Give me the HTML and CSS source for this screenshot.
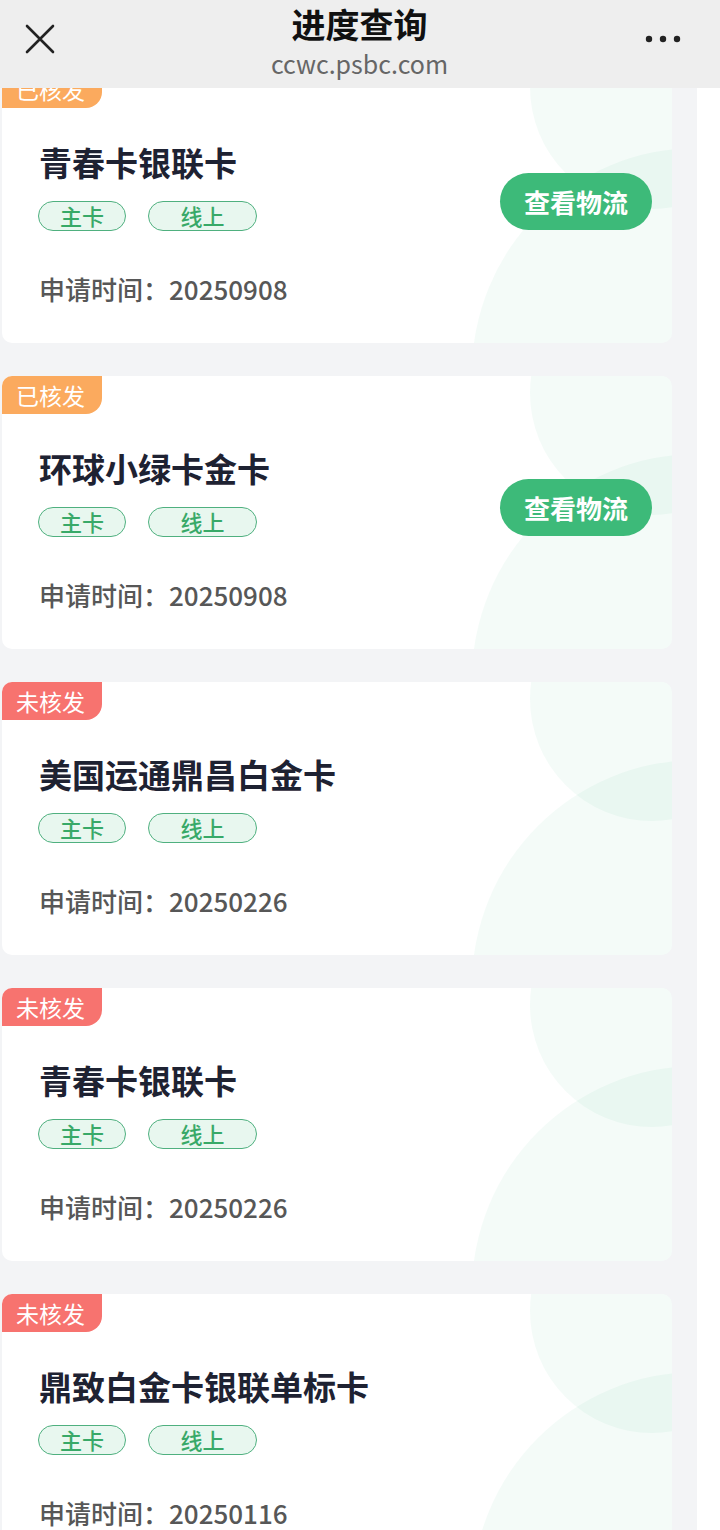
FILE: index.html
```html
<!DOCTYPE html>
<html lang="zh-CN">

<head>
    <meta charset="UTF-8">
    <meta name="viewport" content="width=device-width, initial-scale=1.0">
    <title>进度查询</title>
    <link rel="stylesheet" href="styles.css">
</head>

<body>
    <div class="topBar">
        <svg class="closeIcon" width="34" height="34" viewBox="0 0 34 34">
            <path d="M4 4 L30 30 M30 4 L4 30" stroke="#222" stroke-width="2.6" stroke-linecap="round" fill="none" />
        </svg>
        <div class="topTitle">
            <div class="titleMain">进度查询</div>
            <div class="titleSub">ccwc.psbc.com</div>
        </div>
        <svg class="moreIcon" width="40" height="10" viewBox="0 0 40 10">
            <circle cx="5" cy="5" r="3.2" fill="#222" />
            <circle cx="19" cy="5" r="3.2" fill="#222" />
            <circle cx="33" cy="5" r="3.2" fill="#222" />
        </svg>
    </div>

    <div id="list">
        <div class="card">
            <div class="deco decoTop"></div>
            <div class="deco decoBig"></div>
            <div class="badge done">已核发</div>
            <div class="cardHead">
                <div class="cardInfo">
                    <div class="cardName">青春卡银联卡</div>
                    <div class="tags">
                        <span class="tag tagMain">主卡</span>
                        <span class="tag tagLine">线上</span>
                    </div>
                </div>
                <button class="logistics">查看物流</button>
            </div>
            <div class="applyTime">申请时间：20250908</div>
        </div>

        <div class="card">
            <div class="deco decoTop"></div>
            <div class="deco decoBig"></div>
            <div class="badge done">已核发</div>
            <div class="cardHead">
                <div class="cardInfo">
                    <div class="cardName">环球小绿卡金卡</div>
                    <div class="tags">
                        <span class="tag tagMain">主卡</span>
                        <span class="tag tagLine">线上</span>
                    </div>
                </div>
                <button class="logistics">查看物流</button>
            </div>
            <div class="applyTime">申请时间：20250908</div>
        </div>

        <div class="card">
            <div class="deco decoTop"></div>
            <div class="deco decoBig"></div>
            <div class="badge notDone">未核发</div>
            <div class="cardHead">
                <div class="cardInfo">
                    <div class="cardName">美国运通鼎昌白金卡</div>
                    <div class="tags">
                        <span class="tag tagMain">主卡</span>
                        <span class="tag tagLine">线上</span>
                    </div>
                </div>
            </div>
            <div class="applyTime">申请时间：20250226</div>
        </div>

        <div class="card">
            <div class="deco decoTop"></div>
            <div class="deco decoBig"></div>
            <div class="badge notDone">未核发</div>
            <div class="cardHead">
                <div class="cardInfo">
                    <div class="cardName">青春卡银联卡</div>
                    <div class="tags">
                        <span class="tag tagMain">主卡</span>
                        <span class="tag tagLine">线上</span>
                    </div>
                </div>
            </div>
            <div class="applyTime">申请时间：20250226</div>
        </div>

        <div class="card">
            <div class="deco decoTop"></div>
            <div class="deco decoBig"></div>
            <div class="badge notDone">未核发</div>
            <div class="cardHead">
                <div class="cardInfo">
                    <div class="cardName">鼎致白金卡银联单标卡</div>
                    <div class="tags">
                        <span class="tag tagMain">主卡</span>
                        <span class="tag tagLine">线上</span>
                    </div>
                </div>
            </div>
            <div class="applyTime">申请时间：20250116</div>
        </div>
    </div>
</body>

</html>
```

FILE: styles.css
```css
* {
    margin: 0;
    padding: 0;
    box-sizing: border-box;
}

body {
    background-color: #ffffff;
    font-family: "Noto Sans CJK SC", "Noto Sans", sans-serif;
    height: 1530px;
    overflow: hidden;
}

.topBar {
    position: relative;
    z-index: 2;
    height: 88px;
    background-color: #eeeeee;
    display: flex;
    align-items: center;
    justify-content: space-between;
    padding: 0 36px 0 23px;
}

.closeIcon {
    margin-top: -10px;
}

.moreIcon {
    margin-top: -10px;
}

.topTitle {
    align-self: flex-start;
    display: flex;
    flex-direction: column;
    align-items: center;
    margin-left: 18px;
    padding-top: 5px;
}

.titleMain {
    font-size: 34px;
    font-weight: bold;
    color: #111111;
    line-height: 38px;
}

.titleSub {
    font-size: 25px;
    color: #666666;
    line-height: 30px;
    margin-top: 5px;
}

#list {
    width: 697px;
    background-color: #f3f4f6;
    margin-top: -18px;
    padding: 0 0 0 2px;
    display: flex;
    flex-direction: column;
    gap: 33px;
}

.card {
    position: relative;
    overflow: hidden;
    width: 670px;
    height: 273px;
    background-color: #ffffff;
    border-radius: 10px;
}

.deco {
    position: absolute;
    border-radius: 50%;
    background-color: rgba(60, 190, 120, 0.055);
}

.decoTop {
    width: 244px;
    height: 244px;
    left: 528px;
    top: -105px;
}

.decoBig {
    width: 450px;
    height: 450px;
    left: 470px;
    top: 78px;
}

.badge {
    position: relative;
    width: 100px;
    height: 38px;
    color: #ffffff;
    font-size: 23px;
    line-height: 38px;
    padding-left: 14px;
    border-bottom-right-radius: 16px;
}

.done {
    background-color: #fbaa5e;
}

.notDone {
    background-color: #f7736f;
}

.cardHead {
    position: relative;
    display: flex;
    justify-content: space-between;
    align-items: flex-end;
    padding: 33px 20px 0 36px;
}

.cardName {
    font-size: 33px;
    font-weight: bold;
    color: #1e2232;
    line-height: 42px;
    padding-left: 1px;
}

.tags {
    display: flex;
    gap: 22px;
    margin-top: 18px;
}

.tag {
    height: 30px;
    border: 1.5px solid #4fb07f;
    border-radius: 15px;
    background-color: #e8f7ef;
    color: #38a968;
    font-size: 22px;
    font-weight: 500;
    line-height: 27px;
    text-align: center;
}

.tagMain {
    width: 88px;
}

.tagLine {
    width: 109px;
}

.logistics {
    width: 152px;
    height: 57px;
    border: none;
    border-radius: 29px;
    background-color: #3dba79;
    color: #ffffff;
    font-family: "Noto Sans CJK SC", sans-serif;
    font-size: 26px;
    font-weight: bold;
    margin-bottom: 1px;
}

.applyTime {
    position: relative;
    font-size: 26px;
    font-weight: 500;
    color: #575757;
    line-height: 34px;
    padding: 41px 0 0 37px;
}
```
